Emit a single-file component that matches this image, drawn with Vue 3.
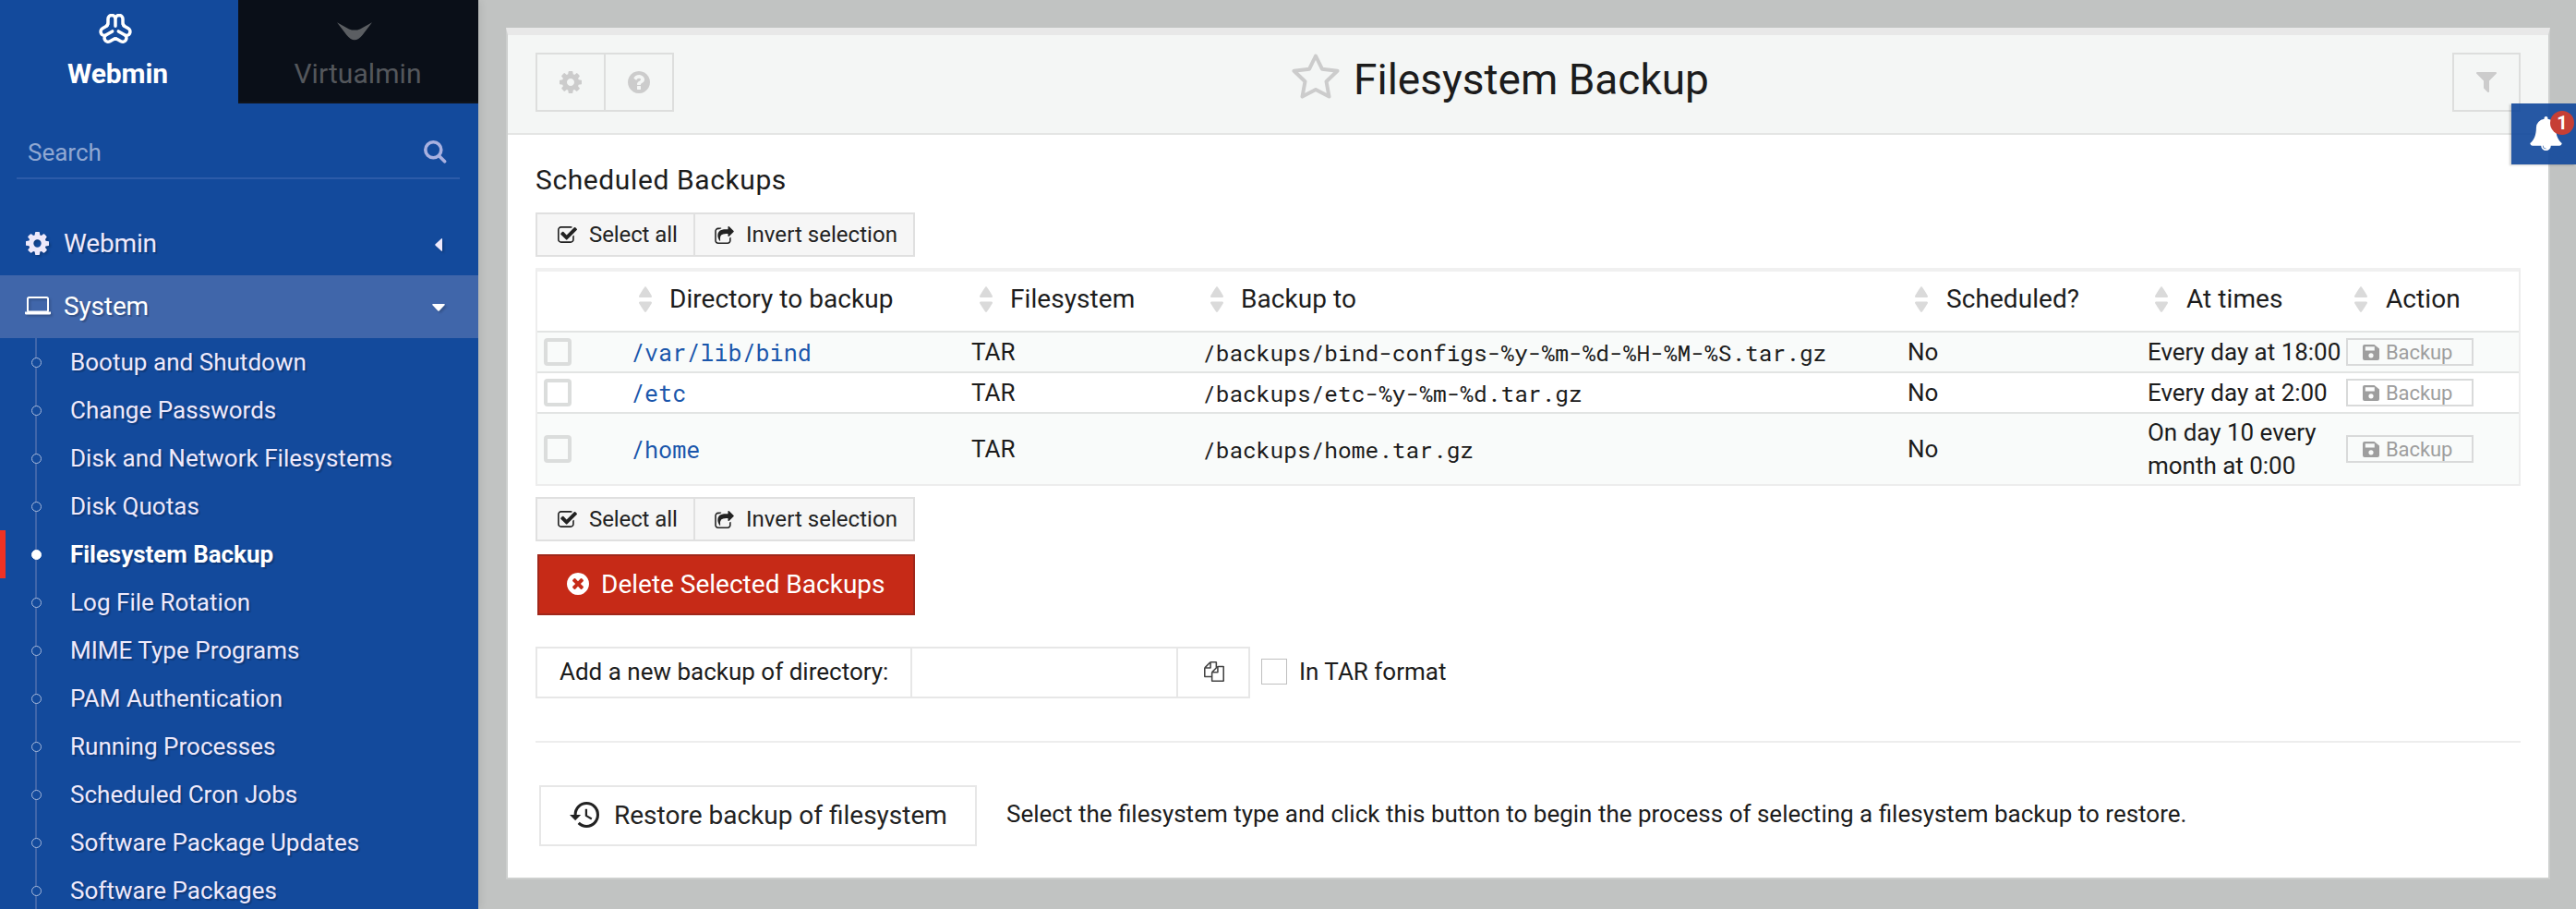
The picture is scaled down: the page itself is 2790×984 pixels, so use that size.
<script setup>
import { ref } from 'vue'

const gear = 'M1024 640q0 106-75 181t-181 75-181-75-75-181 75-181 181-75 181 75 75 181zm512-109v222q0 12-8 23t-20 13l-185 28q-19 54-39 91 35 50 107 138 10 12 10 25t-9 23q-27 37-99 108t-94 71q-12 0-26-9l-138-108q-44 23-91 38-16 136-29 186-7 28-36 28h-222q-14 0-24.5-8.5t-11.5-21.5l-28-184q-49-16-90-37l-141 107q-10 9-25 9-14 0-25-11-126-114-165-168-7-10-7-23 0-12 8-23 15-21 51-66.5t54-70.5q-27-50-41-99l-183-27q-13-2-21-12.5t-8-23.5v-222q0-12 8-23t19-13l186-28q14-46 39-92-40-57-107-138-10-12-10-24 0-10 9-23 26-36 98.5-107.5t94.5-71.5q13 0 26 10l138 107q44-23 91-38 16-136 29-186 7-28 36-28h222q14 0 24.5 8.5t11.5 21.5l28 184q49 16 90 37l142-107q9-9 24-9 13 0 25 10 129 119 165 170 7 8 7 22 0 12-8 23-15 21-51 66.5t-54 70.5q26 50 41 98l183 28q13 2 21 12.5t8 23.5z'
const question = 'M1024 1376v-192q0-14-9-23t-23-9h-192q-14 0-23 9t-9 23v192q0 14 9 23t23 9h192q14 0 23-9t9-23zm256-672q0-88-55.5-163t-138.5-116-170-41q-243 0-371 213-15 24 8 42l132 100q7 6 19 6 16 0 25-12 53-68 86-92 34-24 86-24 48 0 85.5 26t37.5 59q0 38-20 61t-68 45q-63 28-115.5 86.5t-52.5 125.5v36q0 14 9 23t23 9h192q14 0 23-9t9-23q0-19 21.5-49.5t54.5-49.5q32-18 49-28.5t46-35 44.5-48 28-60.5 12.5-81zm384 192q0 209-103 385.5t-279.5 279.5-385.5 103-385.5-103-279.5-279.5-103-385.5 103-385.5 279.5-279.5 385.5-103 385.5 103 279.5 279.5 103 385.5z'
const timesCircle = 'M1277 1122q0-26-19-45l-181-181 181-181q19-19 19-45 0-27-19-46l-90-90q-19-19-46-19-26 0-45 19l-181 181-181-181q-19-19-45-19-27 0-46 19l-90 90q-19 19-19 46 0 26 19 45l181 181-181 181q-19 19-19 45 0 27 19 46l90 90q19 19 46 19 26 0 45-19l181-181 181 181q19 19 45 19 27 0 46-19l90-90q19-19 19-46zm387-226q0 209-103 385.5t-279.5 279.5-385.5 103-385.5-103-279.5-279.5-103-385.5 103-385.5 279.5-279.5 385.5-103 385.5 103 279.5 279.5 103 385.5z'
const checkSquare = 'M1472 930v318q0 119-84.5 203.5t-203.5 84.5h-832q-119 0-203.5-84.5t-84.5-203.5v-832q0-119 84.5-203.5t203.5-84.5h832q63 0 117 25 15 7 18 23 3 17-9 29l-49 49q-10 10-23 10-3 0-9-2-23-6-45-6h-832q-66 0-113 47t-47 113v832q0 66 47 113t113 47h832q66 0 113-47t47-113v-254q0-13 9-22l64-64q10-10 23-10 6 0 12 3 20 8 20 29zm231-489l-814 814q-24 24-57 24t-57-24l-430-430q-24-24-24-57t24-57l110-110q24-24 57-24t57 24l263 263 647-647q24-24 57-24t57 24l110 110q24 24 24 57t-24 57z'
const shareSquare = 'M1472 989v259q0 119-84.5 203.5t-203.5 84.5h-832q-119 0-203.5-84.5t-84.5-203.5v-832q0-119 84.5-203.5t203.5-84.5h255q13 0 22.5 9.5t9.5 22.5q0 27-26 32-77 26-133 60-10 4-16 4h-112q-66 0-113 47t-47 113v832q0 66 47 113t113 47h832q66 0 113-47t47-113v-214q0-19 18-29 28-13 54-37 16-16 35-8 21 9 21 29zm237-496l-384 384q-18 19-45 19-12 0-25-5-39-17-39-59v-192h-160q-323 0-438 131-119 137-74 473 3 23-20 34-8 2-12 2-16 0-26-13-10-14-21-31t-39.5-68.5-49.5-99.5-38.5-114-17.5-122q0-49 3.5-91t14-90 28-88 47-81.5 68.5-74 94.5-61.5 124.5-48.5 159.5-30.5 196.5-11h160v-192q0-42 39-59 13-5 25-5 26 0 45 19l384 384q19 19 19 45t-19 45z'
const bell = 'M912 1696q0-16-16-16-59 0-101.5-42.5t-42.5-101.5q0-16-16-16t-16 16q0 73 51.5 124.5t124.5 51.5q16 0 16-16zm816-288q0 52-38 90t-90 38h-448q0 106-75 181t-181 75-181-75-75-181h-448q-52 0-90-38t-38-90q50-42 91-88t85-119.5 74.5-158.5 50-206 19.5-260q0-152 117-282.5t307-158.5q-8-19-8-39 0-40 28-68t68-28 68 28 28 68q0 20-8 39 190 28 307 158.5t117 282.5q0 139 19.5 260t50 206 74.5 158.5 85 119.5 91 88z'
const funnel = 'M1595 295q17 41-14 70l-493 493v742q0 42-39 59-13 5-25 5-27 0-45-19l-256-256q-19-19-19-45v-486l-493-493q-31-29-14-70 17-39 59-39h1280q42 0 59 39z'
const files = 'M1696 384q40 0 68 28t28 68v1216q0 40-28 68t-68 28h-960q-40 0-68-28t-28-68v-288h-544q-40 0-68-28t-28-68v-672q0-40 20-88t48-76l408-408q28-28 76-48t88-20h416q40 0 68 28t28 68v328q68-40 128-40h416zm-544 213l-299 299h299v-299zm-640-384l-299 299h299v-299zm196 647l316-316v-416h-384v416q0 40-28 68t-68 28h-416v640h512v-256q0-40 20-88t48-76zm956 804v-1152h-384v416q0 40-28 68t-68 28h-416v640h896z'
const history = 'M13 3a9 9 0 0 0-9 9H1l3.89 3.89.07.14L9 12H6c0-3.87 3.13-7 7-7s7 3.13 7 7-3.13 7-7 7c-1.93 0-3.68-.79-4.94-2.06l-1.42 1.42A8.954 8.954 0 0 0 13 21a9 9 0 0 0 0-18zm-1 5v5l4.28 2.54.72-1.21-3.5-2.08V8H12z'
const lobe = 'M-9.3-4.2Q-8-5.2-8-7.5V-11.500A4 4 0 0 1 0-11.500V-3.800M0-11.500A4 4 0 0 1 8-11.500V-7.500Q8-5.2 9.3-4.2'

const modules = [
  'Bootup and Shutdown', 'Change Passwords', 'Disk and Network Filesystems', 'Disk Quotas',
  'Filesystem Backup', 'Log File Rotation', 'MIME Type Programs', 'PAM Authentication',
  'Running Processes', 'Scheduled Cron Jobs', 'Software Package Updates', 'Software Packages',
]
const current = ref('Filesystem Backup')

const columns = ['Directory to backup', 'Filesystem', 'Backup to', 'Scheduled?', 'At times', 'Action']
const backups = [
  { dir: '/var/lib/bind', dest: '/backups/bind-configs-%y-%m-%d-%H-%M-%S.tar.gz', times: 'Every day at 18:00' },
  { dir: '/etc', dest: '/backups/etc-%y-%m-%d.tar.gz', times: 'Every day at 2:00' },
  { dir: '/home', dest: '/backups/home.tar.gz', times: 'On day 10 every month at 0:00', tall: true },
]
</script>

<template>
  <div class="app">
    <aside class="sidebar">
      <div class="tabs">
        <div class="tab active">
          <svg class="logo" width="38" height="36" viewBox="-19 -17 38 36">
            <path v-for="a in [0, 120, 240]" :key="a" :d="lobe" :transform="`rotate(${a})`" />
          </svg>
          <span>Webmin</span>
        </div>
        <div class="tab dark">
          <svg class="crescent" width="38" height="20" viewBox="0 0 38 20"><path d="M0 .3 13 7.4Q19 9.8 25 7.4L38 .3 27.5 14Q19 24.5 10.5 14Z" /></svg>
          <span>Virtualmin</span>
        </div>
      </div>
      <div class="search">
        <span>Search</span>
        <svg width="25" height="25" viewBox="0 0 25 25"><circle cx="10.3" cy="10.3" r="8.5" /><path d="M16.5 16.7 22.6 22.8" /></svg>
      </div>
      <nav class="menu">
        <div class="group">
          <svg width="25" height="25" viewBox="0 -128 1536 1536"><path fill-rule="evenodd" :d="gear" /></svg>
          <span>Webmin</span>
          <svg class="caret left" width="8" height="14" viewBox="0 0 8 14"><path d="M8 1v12q0 1.4-1.2.6L.6 7.7q-.8-.7 0-1.4L6.8.4Q8-.4 8 1z" /></svg>
        </div>
        <div class="group open">
          <svg class="laptop" width="28" height="20" viewBox="0 0 28 20"><rect x="3" y="1" width="22" height="15.5" rx="1.6" /><path d="M0 16.6h28v2q0 1-1.6 1H1.6Q0 19.600 0 18.600z" /></svg>
          <span>System</span>
          <svg class="caret" width="14" height="8" viewBox="0 0 14 8"><path d="M1 0h12q1.400 0 .6 1.200L7.700 7.400q-.7.800-1.400 0L.4 1.200Q-.4 0 1 0z" /></svg>
        </div>
        <ul>
          <li v-for="m in modules" :key="m" :class="{ on: m === current }"><i></i>{{ m }}</li>
        </ul>
      </nav>
    </aside>

    <main class="panel">
      <header>
        <div class="tools">
          <button><svg width="24" height="24" viewBox="0 -128 1536 1536"><path fill-rule="evenodd" :d="gear" /></svg></button>
          <button><svg width="24" height="24" viewBox="128 128 1536 1536"><path :d="question" /></svg></button>
        </div>
        <h1>
          <svg width="52" height="50" viewBox="0 0 52 50"><path d="M26 3.500 32.900 17.700 49.500 19.700 37.500 31.200 40.500 47.600 26 40 11.500 47.600 14.500 31.200 2.500 19.700 19.100 17.700Z" /></svg>
          <span>Filesystem Backup</span>
        </h1>
        <div class="tools right">
          <button><svg width="22" height="22" viewBox="192 256 1408 1408"><path :d="funnel" /></svg></button>
        </div>
      </header>

      <section class="body">
        <h2>Scheduled Backups</h2>
        <div class="select">
          <button><svg width="21" height="18" viewBox="64 128 1664 1408"><path :d="checkSquare" /></svg>Select all</button>
          <button><svg width="21" height="19" viewBox="64 0 1664 1536"><path :d="shareSquare" /></svg>Invert selection</button>
        </div>

        <div class="table">
          <div class="row head">
            <div></div>
            <div v-for="(c, i) in columns" :key="c" :class="['th', { wide: i > 2 }]">
              <svg width="14" height="28" viewBox="0 0 14 28"><path d="M7 0Q8 0 14 10.500 14 12 13 12H1Q0 12 0 10.500 6 0 7 0zM1 16.500H13Q14 16.500 14 18 8 28 7 28 6 28 0 18 0 16.500 1 16.500z" /></svg>{{ c }}
            </div>
          </div>
          <div v-for="b in backups" :key="b.dir" :class="['row', { tall: b.tall }]">
            <div><span class="box"></span></div>
            <a class="mono link">{{ b.dir }}</a>
            <div>TAR</div>
            <div class="mono">{{ b.dest }}</div>
            <div class="state">No</div>
            <div class="times">{{ b.times }}</div>
            <div>
              <button class="mini">
                <svg width="18" height="17" viewBox="0 0 18 17"><path fill-rule="evenodd" d="M2 0H12.500L18 4.500V15Q18 17 16 17H2Q0 17 0 15V2Q0 0 2 0zM2.800 2.200V6.500H12.800V2.200zM9 9.200A2.600 2.600 0 1 0 9 14.400 2.600 2.600 0 1 0 9 9.200z" /></svg>Backup
              </button>
            </div>
          </div>
        </div>

        <div class="select">
          <button><svg width="21" height="18" viewBox="64 128 1664 1408"><path :d="checkSquare" /></svg>Select all</button>
          <button><svg width="21" height="19" viewBox="64 0 1664 1536"><path :d="shareSquare" /></svg>Invert selection</button>
        </div>

        <button class="delete"><svg width="24" height="24" viewBox="128 128 1536 1536"><path :d="timesCircle" /></svg>Delete Selected Backups</button>

        <div class="add">
          <div class="field">
            <label>Add a new backup of directory:</label>
            <div class="input"></div>
            <div class="pick"><svg width="22" height="22" viewBox="0 0 1792 1792"><path :d="files" /></svg></div>
          </div>
          <span class="check"></span>
          <span>In TAR format</span>
        </div>

        <div class="rule"></div>

        <div class="restore">
          <button><svg width="32" height="28" viewBox="1 3 21 18" preserveAspectRatio="none"><path :d="history" /></svg>Restore backup of filesystem</button>
          <span>Select the filesystem type and click this button to begin the process of selecting a filesystem backup to restore.</span>
        </div>
      </section>
    </main>

    <div class="notify">
      <svg width="35" height="37" viewBox="64 0 1664 1792"><path :d="bell" /></svg>
      <span class="badge">1</span>
    </div>
  </div>
</template>

<style>
body { margin: 0; overflow: hidden; }
</style>

<style scoped>
* { box-sizing: border-box; }
.app { position: relative; display: flex; width: 2790px; height: 984px; overflow: hidden; background: #c1c3c2; font: 26px Roboto, "Liberation Sans", sans-serif; color: #1c1c1c; }
svg { display: block; flex: none; fill: currentColor; }
button { font: inherit; color: inherit; background: none; padding: 0; margin: 0; border: 0; border-radius: 0; display: flex; align-items: center; white-space: nowrap; }

.sidebar { width: 518px; flex: none; background: #134a9c; color: #eee9fb; box-shadow: 2px 0 8px rgba(0, 0, 0, .09); }
.tabs { display: flex; height: 112px; font-size: 30px; }
.tab { display: flex; flex-direction: column; align-items: center; line-height: 40px; }
.active { width: 258px; padding-top: 15px; color: #fff; font-weight: 700; }
.active span { margin-top: 9px; margin-right: 3px; letter-spacing: -.1px; }
.logo { margin-right: 9px; fill: none; stroke: #fff; stroke-width: 3.5; stroke-linecap: round; stroke-linejoin: round; }
.dark { width: 260px; padding-top: 24px; background: #0a0f18; border-bottom: 2px solid #10141c; color: #54575c; }
.dark span { margin-top: 16px; margin-right: 1px; letter-spacing: .07px; }
.crescent { margin-right: 8px; color: #5b5e62; }
.search { display: flex; align-items: center; height: 82px; margin: 0 20px 0 18px; padding: 26px 14px 0 12px; border-bottom: 2px solid #2c5ba9; color: #90a8d2; }
.search svg { margin-left: auto; margin-top: -2px; fill: none; stroke: #a9b1e0; stroke-width: 3.6; stroke-linecap: round; }
.menu { margin-top: 36px; text-shadow: 2px 2px 1px rgba(0, 0, 0, .2); }
.group { display: flex; align-items: center; height: 68px; padding: 0 36px 2px 28px; font-size: 28px; }
.group span { flex: 1; margin-left: 16px; letter-spacing: -.15px; }
.group svg { filter: drop-shadow(2px 2px 1px rgba(0, 0, 0, .18)); }
.open { color: #fff; background: #4066aa; }
.laptop { margin-left: -1px; }
.laptop rect { fill: none; stroke: #fff; stroke-width: 2; }
.open span { margin-left: 14px; }
.caret { margin-top: 4px; }
.left { margin-right: 3px; }
ul { list-style: none; margin: 0; padding: 0; background: linear-gradient(#4066aa, #4066aa) 38px 0 / 2px 100% no-repeat; }
li { display: flex; align-items: center; height: 52px; padding-left: 34px; line-height: 52px; letter-spacing: .03px; }
li i { width: 11px; height: 11px; margin-right: 31px; border: 1.500px solid #a9bbdc; border-radius: 50%; background: #134a9c; }
.on { color: #fff; font-weight: 700; padding-left: 28px; border-left: 6px solid #ef3224; letter-spacing: -.05px; }
.on i { background: #fff; border-color: #fff; }

.panel { width: 2214px; height: 922px; margin: 30px 0 0 30px; background: #fff; border: 2px solid #cdcfce; border-top: 8px solid #e8e8e8; }
header { display: flex; justify-content: space-between; height: 108px; padding: 19px 30px 0; background: #f4f6f5; border-bottom: 2px solid #e4e5e4; }
.tools { display: flex; height: 64px; border: 2px solid #dddedd; color: #ccc; }
.tools button { width: 74px; justify-content: center; }
.tools button:first-child { width: 72px; }
.tools button + button { border-left: 2px solid #dddedd; width: 74px; }
.right { width: 74px; }
.right button:first-child { width: 70px; }
h1 { display: flex; align-items: flex-start; margin: -1px 0 0; font-size: 46px; font-weight: 400; line-height: 60px; padding-right: 136px; }
h1 svg { fill: none; stroke: #ccc; stroke-width: 4; stroke-linejoin: round; margin-top: 1px; }
h1 span { margin-left: 15px; }

.body { padding: 0 30px; }
h2 { height: 84px; margin: 0; font-size: 30px; font-weight: 400; line-height: 97px; letter-spacing: .6px; }
.select { display: flex; width: 411px; height: 48px; border: 2px solid #e0e0e0; background: #f6f6f6; font-size: 24px; color: #222; }
.select svg { margin-right: 13px; }
.select button { flex: 1; padding-left: 21px; letter-spacing: .04px; }
.select button:first-child { flex: none; width: 171px; padding-left: 22px; border-right: 2px solid #e0e0e0; letter-spacing: -.1px; }

.table { margin: 12px 0; border: 2px solid #ededed; border-top: 4px solid #f0f0f0; }
.row { display: grid; grid-template-columns: 101px 369px 250px 763px 260px 216px 1fr; align-items: center; height: 44px; border-bottom: 2px solid #e2e4e3; background: #f9fbfa; white-space: nowrap; }
.row:nth-child(odd) { background: #fff; }
.row.head { height: 66px; background: #fff; font-size: 28px; }
.row:last-child { height: 76px; border-bottom: 0; }
.th { display: flex; align-items: center; padding: 0 0 4px 9px; line-height: 60px; letter-spacing: .06px; }
.th svg { margin-right: 19px; color: #dadada; }
.wide svg { margin-right: 20px; }
.mono { font-family: "Roboto Mono", "DejaVu Sans Mono", monospace; font-size: 24.500px; }
.link { font-size: 25.100px; color: #1a56ab; }
.state { padding-left: 1px; }
.times { padding-left: 1px; letter-spacing: -.02px; }
.tall .times { width: 200px; white-space: normal; line-height: 36px; }
.box { display: block; width: 30px; height: 30px; margin-left: 7px; border: 4px solid #dbdddc; border-radius: 4px; }
.mini { width: 138px; height: 30px; padding-left: 16px; border: 2px solid #d9dada; color: #9e9e9e; font-size: 22px; letter-spacing: -.1px; }
.mini svg { margin-right: 7px; }

.delete { width: 409px; height: 66px; margin: 14px 0 0 2px; padding: 0 0 2px 30px; border: 2px solid #a0271a; background: #c62a17; color: #fff; font-size: 28px; }
.delete svg { margin-right: 13px; }
.add { display: flex; align-items: center; margin-top: 34px; }
.field { display: flex; width: 774px; height: 56px; margin-right: 12px; border: 2px solid #e7e7e7; line-height: 51px; }
.field label { width: 406px; padding-left: 24px; border-right: 2px solid #e7e7e7; }
.input { width: 286px; }
.pick { flex: 1; padding: 14px 0 0 28px; border-left: 2px solid #e7e7e7; color: #444; }
.check { width: 28px; height: 28px; margin: -2px 13px 0 0; border: 1px solid #bfbfbf; }
.add > span:last-child { line-height: 30px; margin-top: -2px; }
.rule { height: 2px; margin: 46px 0; background: #ededed; }
.restore { display: flex; align-items: flex-start; }
.restore button { width: 474px; height: 66px; margin-left: 4px; padding: 0 0 2px 31px; border: 2px solid #e7e7e7; font-size: 28px; color: #222; }
.restore svg { margin-right: 16px; }
.restore span { margin-left: 32px; line-height: 62px; white-space: nowrap; }

.notify { position: absolute; left: 2720px; top: 112px; width: 70px; height: 66px; background: rgba(19, 74, 156, .92); box-shadow: -2px 1px 2px rgba(0, 0, 0, .18); color: #fff; }
.notify svg { margin: 14px 0 0 20px; }
.badge { position: absolute; left: 42px; top: 8px; width: 26px; height: 26px; border-radius: 50%; background: #c63f35; font-size: 20px; font-weight: 700; line-height: 26px; text-align: center; }
</style>
